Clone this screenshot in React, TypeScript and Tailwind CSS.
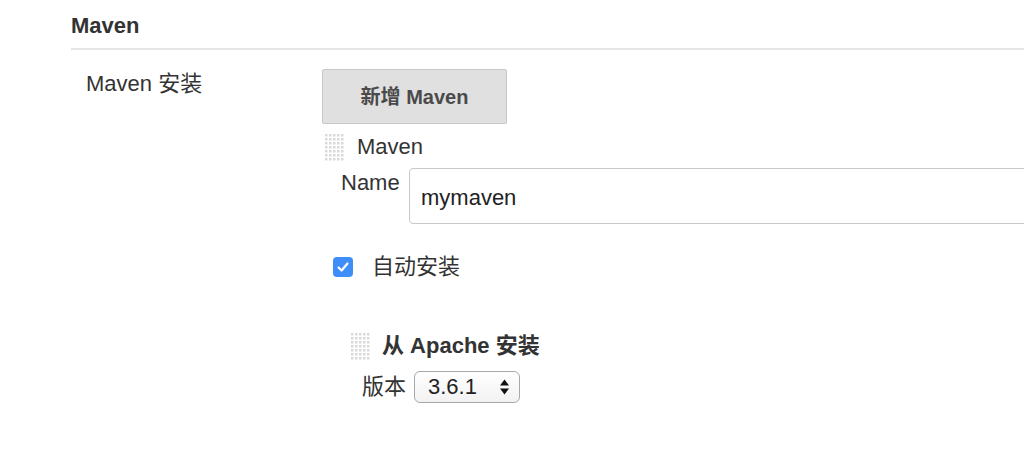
import React from 'react'

const font = { fontFamily: '"Liberation Sans", "Noto Sans CJK SC", Arial, sans-serif' }

function Grip() {
  return (
    <svg width="20" height="28" viewBox="0 0 20 28" className="shrink-0">
      {Array.from({ length: 7 }).map((_, r) =>
        Array.from({ length: 5 }).map((_, c) => (
          <rect key={`${r}-${c}`} x={c * 4 + 1} y={r * 4 + 1} width="2.5" height="2.5" fill="#d9d9d9" />
        )),
      )}
    </svg>
  )
}

function Checkbox() {
  return (
    <span className="flex h-[20px] w-[20px] shrink-0 items-center justify-center rounded-[4px] bg-[#3d8ef7]">
      <svg width="14" height="14" viewBox="0 0 14 14">
        <path d="M2.5 7.5 L5.6 10.5 L11.5 3.5" fill="none" stroke="#fff" strokeWidth="2.2" strokeLinecap="round" strokeLinejoin="round" />
      </svg>
    </span>
  )
}

function VersionSelect() {
  return (
    <div className="flex h-[32px] w-[106px] items-center justify-between rounded-[6px] border border-[#a8a8a8] bg-gradient-to-b from-white to-[#f2f2f2] pl-[13px] pr-[9px]">
      <span className="text-[22px] leading-[28px] text-[#222]">3.6.1</span>
      <svg width="11" height="20" viewBox="0 0 11 20">
        <path d="M5.5 2.5 L10 8.5 L1 8.5 Z" fill="#111" />
        <path d="M5.5 17.5 L10 11.5 L1 11.5 Z" fill="#111" />
      </svg>
    </div>
  )
}

export default function App() {
  return (
    <div className="h-[468px] w-full overflow-hidden bg-white text-[#333]" style={font}>
      <div className="pl-[71px]">
        <div className="border-b-2 border-[#e6e6e6] pb-[8px] pt-[12px]">
          <h2 className="text-[22px] font-bold leading-[28px] text-[#333]">Maven</h2>
        </div>

        <div className="flex">
          <div className="w-[251px] shrink-0 pl-[15px] pt-[20px] text-[22px] leading-[28px]">Maven 安装</div>

          <div className="flex flex-col pt-[19px]">
            <button className="h-[55px] w-[185px] rounded-[2px] border border-[#c8c8c8] bg-[#e0e0e0] text-[20px] font-bold text-[#4a4a4a]">
              新增 Maven
            </button>

            <div className="ml-[2px] mt-[9px] flex items-center gap-[13px]">
              <Grip />
              <span className="text-[22px] leading-[28px]">Maven</span>
            </div>

            <div className="mt-[7px] flex items-start">
              <span className="ml-[19px] mt-[1px] w-[68px] text-[22px] leading-[28px]">Name</span>
              <div className="flex h-[56px] w-[640px] items-center rounded-[4px] border border-[#c8c8c8] pl-[11px] pt-[2px] text-[22px] text-[#222]">
                mymaven
              </div>
            </div>

            <div className="ml-[11px] mt-[29px] flex items-center gap-[19px]">
              <Checkbox />
              <span className="text-[22px] leading-[28px]">自动安装</span>
            </div>

            <div className="ml-[28px] mt-[51px] flex items-center gap-[12px]">
              <Grip />
              <span className="text-[22px] font-bold leading-[28px]">从 Apache 安装</span>
            </div>

            <div className="ml-[40px] mt-[11px] flex items-center gap-[8px]">
              <span className="text-[22px] leading-[28px]">版本</span>
              <VersionSelect />
            </div>
          </div>
        </div>
      </div>
    </div>
  )
}
